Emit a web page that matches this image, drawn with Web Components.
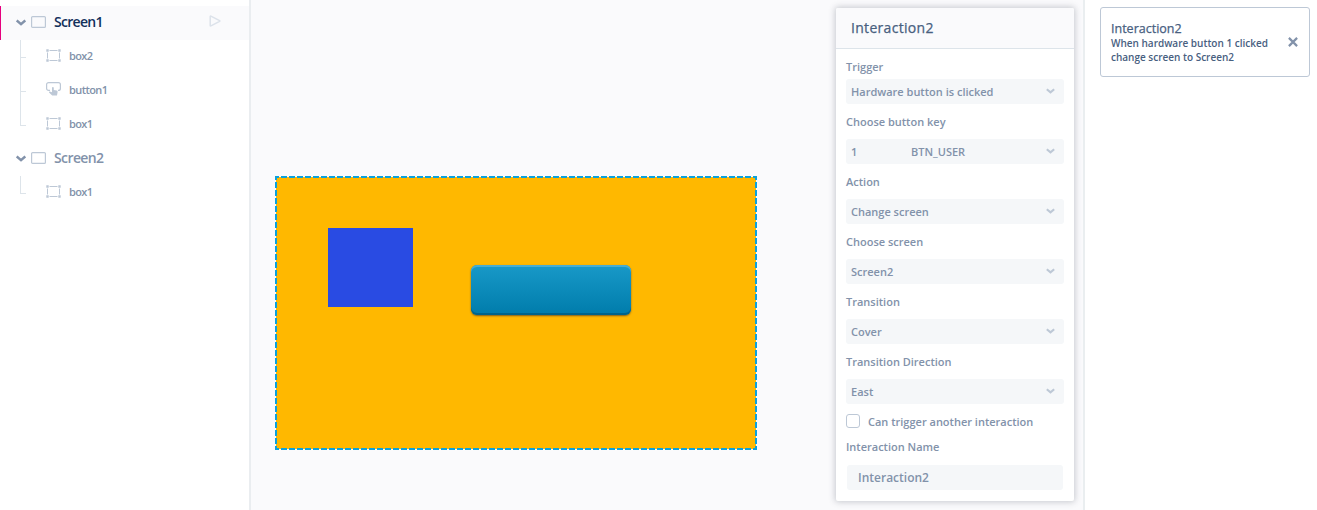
<!DOCTYPE html>
<html lang="en">
<head>
<meta charset="utf-8">
<title>Interaction editor</title>
<style>
body { margin: 0; background: #fafafc; font-family: "Open Sans", "Noto Sans", sans-serif; }
</style>
</head>
<body>
<editor-app></editor-app>
<script>
const define = (name, html, setup) => {
  customElements.define(name, class extends HTMLElement {
    connectedCallback() {
      if (this.shadowRoot) return;
      const t = document.createElement('template');
      t.innerHTML = '<style>*{box-sizing:border-box}:host{box-sizing:border-box}</style>' + html;
      this.attachShadow({ mode: 'open' }).append(t.content.cloneNode(true));
      if (setup) setup(this, this.shadowRoot);
    }
  });
};

const icons = {
  chevron: ['0 0 10 7', '<path d="M.7 1.4 5 5.1 9.3 1.4" fill="none" stroke="currentColor" stroke-width="2.5"/>'],
  screen: ['0 0 15 12', '<rect x=".6" y=".6" width="13.8" height="10.8" rx="1" fill="none" stroke="currentColor" stroke-width="1.2"/>'],
  play: ['0 0 12 12', '<path d="M1.2 1.5Q1.2.8 1.9 1.1L10.6 5.6Q11.2 6 10.6 6.4L1.9 10.8Q1.2 11.1 1.2 10.4Z" fill="none" stroke="currentColor" stroke-width="1.5"/>'],
  box: ['0 0 15 13', '<path d="M3.5 1.5h8M3.5 11.5h8M1.5 3.5v6M13.5 3.5v6" fill="none" stroke="currentColor"/><path d="M.3.3h2.4v2.4H.3zM12.3.3h2.4v2.4h-2.4zM.3 10.3h2.4v2.4H.3zM12.3 10.3h2.4v2.4h-2.4z" fill="currentColor"/>'],
  button: ['0 0 15 14', '<path d="M4 8.4H2.6a2 2 0 0 1-2-2V2.6a2 2 0 0 1 2-2h9.8a2 2 0 0 1 2 2v3.8a2 2 0 0 1-2 2H12" fill="none" stroke="currentColor" stroke-width="1.2"/><path d="M6 6q0-1 .9-1t.9 1V8l2.8.6q1.2.3 1 1.5l-.6 3.4H6.2L3 10.5q-.2-1 .6-1.1l2.4.8z" fill="currentColor"/>'],
  close: ['0 0 10 10', '<path d="M.9.9 9.1 9.1M9.1.9.9 9.1" stroke="currentColor" stroke-width="2.2"/>']
};
define('ui-icon', '<style>:host{display:block;flex:none}svg{display:block;width:100%;height:100%}</style>', (el, root) => {
  const [box, shape] = icons[el.getAttribute('name')];
  root.innerHTML += `<svg viewBox="${box}">${shape}</svg>`;
});

define('tree-screen', `
<style>
:host{display:block;color:#8292aa}
.head{display:flex;align-items:center;height:34px;padding:0 0 2px 16px;font:600 14px/20px "Open Sans",sans-serif;letter-spacing:-.6px}
:host([active]) .head{background:#fafafc;border-left:1px solid #e6007e;padding-left:15px;color:#12305b;letter-spacing:-.7px}
.chev{width:10px;height:7px;color:#8292aa;margin-top:1px}
.scr{width:15px;height:12px;margin:0 8px 0 5px;color:#bdc8d6}
.play{display:none;width:12px;height:12px;color:#dce2ea;margin:-3px 28px 0 auto}
:host([active]) .play{display:block}
</style>
<div class="head"><ui-icon class="chev" name="chevron"></ui-icon><ui-icon class="scr" name="screen"></ui-icon><slot name="title"></slot><ui-icon class="play" name="play"></ui-icon></div>
<slot></slot>`);

define('tree-item', `
<style>
:host{display:flex;height:34px;padding-left:20px;font:600 11px/15px "Open Sans",sans-serif;letter-spacing:-.6px;color:#8292aa}
.branch{width:6px;flex:none;display:flex;flex-direction:column}
.up{height:18px;border-left:1px solid #dde4ea;border-bottom:1px solid #dde4ea}
.down{flex:1;border-left:1px solid #dde4ea}
:host([last]) .down{border:0}
ui-icon{width:15px;height:13px;margin:9px 8px 0 20px;color:#bdc8d6}
ui-icon[name=button]{height:14px;margin-top:8px}
span{margin-top:8px}
</style>
<div class="branch"><div class="up"></div><div class="down"></div></div>`, (el, root) => {
  root.innerHTML += `<ui-icon name="${el.getAttribute('icon')}"></ui-icon><span><slot></slot></span>`;
});

define('screen-canvas', `
<style>
:host{display:block;position:relative;width:480px;height:272px;background:#ffb800;flex:none;margin:177px 0 0 25px}
.edge{position:absolute;left:-1px;top:-1px}
.box{position:absolute;left:52px;top:51px;width:85px;height:79px;background:#294be3}
.btn{position:absolute;left:195px;top:88px;width:160px;height:50px;border-radius:6px;background:linear-gradient(#1899c8,#007cab);box-shadow:inset 0 2px #48acd1,inset 0 -2px #00648b,0 1px 2px #795d22}
</style>
<div class="box"></div><div class="btn"></div>
<svg class="edge" width="482" height="274"><rect x="1" y="1" width="480" height="272" fill="none" stroke="#0ba1dc" stroke-width="2" stroke-dasharray="6 2" stroke-dashoffset="3"/></svg>`);

define('field-select', `
<style>
:host{display:block;font:600 11px/15px "Open Sans",sans-serif;color:#8292aa;margin-top:10px}
.ctl{display:flex;align-items:center;height:25px;margin-top:var(--gap,10px);padding:0 9px 0 5px;background:#f5f7f9;border-radius:3px}
ui-icon{width:9px;height:6px;color:#bdc8d6;margin:-1px 0 0 auto}
</style>
<slot name="label"></slot><div class="ctl"><slot></slot><ui-icon name="chevron"></ui-icon></div>`);

define('interaction-panel', `
<style>
:host{display:block;width:238px;height:493px;margin:8px 9px 0 auto;background:#fff;border-radius:2px;box-shadow:0 0 6px 1px rgba(70,75,90,.28);font:600 11px/15px "Open Sans",sans-serif;color:#8292aa}
header{height:41px;padding:0 15px;background:#fafafc;border-bottom:1px solid #dde4ea;border-radius:2px 2px 0 0;color:#48607f;font-size:14px;font-weight:500;letter-spacing:.3px;line-height:40px;-webkit-text-stroke:.25px #48607f}
.body{padding:0 10px}
.key{width:60px;display:inline-block}
.check{display:flex;margin-top:10px;height:16px}
.check i{width:14px;height:14px;border:1px solid #bdc8d6;border-radius:3px;margin-right:8px}
.name{margin-top:9px}
.input{height:25px;margin:11px 1px 0;padding-left:11px;background:#f5f7f9;border-radius:3px;font-size:12px;line-height:25px}
</style>
<header>Interaction2</header>
<div class="body">
<field-select style="--gap:5px"><span slot="label">Trigger</span>Hardware button is clicked</field-select>
<field-select><span slot="label">Choose button key</span><span class="key">1</span><span>BTN_USER</span></field-select>
<field-select><span slot="label">Action</span>Change screen</field-select>
<field-select><span slot="label">Choose screen</span>Screen2</field-select>
<field-select><span slot="label">Transition</span>Cover</field-select>
<field-select><span slot="label">Transition Direction</span>East</field-select>
<div class="check"><i></i><span>Can trigger another interaction</span></div>
<div class="name">Interaction Name</div><div class="input">Interaction2</div>
</div>`);

define('interaction-card', `
<style>
:host{display:flex;align-items:center;width:210px;height:70px;border:1px solid #bdc8d6;border-radius:3px;padding:0 11px 0 10px;color:#48607f;background:#fff}
div{margin-bottom:2px}
h3{margin:0;padding-top:3px;font:500 12.5px/15px "Open Sans",sans-serif;-webkit-text-stroke:.25px #48607f}
p{margin:0;font:600 10px/14px "Open Sans",sans-serif;white-space:nowrap}
ui-icon{width:10px;height:10px;margin-left:auto;color:#8292aa}
</style>
<div><h3><slot name="title"></slot></h3><p><slot></slot></p></div><ui-icon name="close"></ui-icon>`);

define('editor-app', `
<style>
:host{display:flex;width:1317px;height:510px;overflow:hidden}
.left{width:251px;flex:none;background:#fff;border-right:2px solid #eaedf0;padding-top:6px}
main{flex:1;display:flex;background:#fafafc}
.right{width:234px;flex:none;background:#fff;border-left:2px solid #eaeef0;padding:7px 0 0 15px}
</style>
<aside class="left">
<tree-screen active><span slot="title">Screen1</span><tree-item icon="box">box2</tree-item><tree-item icon="button">button1</tree-item><tree-item icon="box" last>box1</tree-item></tree-screen>
<tree-screen><span slot="title">Screen2</span><tree-item icon="box" last>box1</tree-item></tree-screen>
</aside>
<main><screen-canvas></screen-canvas><interaction-panel></interaction-panel></main>
<aside class="right"><interaction-card><span slot="title">Interaction2</span>When hardware button 1 clicked<br>change screen to Screen2</interaction-card></aside>`);
</script>
</body>
</html>
